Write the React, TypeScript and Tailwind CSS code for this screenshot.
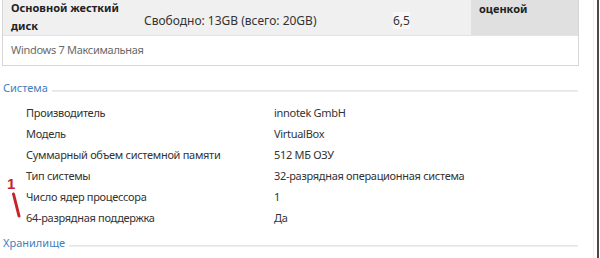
const rows: [string, string][] = [
  ['Производитель', 'innotek GmbH'],
  ['Модель', 'VirtualBox'],
  ['Суммарный объем системной памяти', '512 МБ ОЗУ'],
  ['Тип системы', '32-разрядная операционная система'],
  ['Число ядер процессора', '1'],
  ['64-разрядная поддержка', 'Да'],
];

function SectionHeader({ title }: { title: string }) {
  return (
    <div className="flex h-[20px] w-[576px] items-center">
      <span className="pl-[1px] pr-[4px] text-[11px] text-[#3f7fbf]">{title}</span>
      <div className="mt-[6px] h-[2px] flex-1 bg-gradient-to-b from-[#e2e2e2] to-[#f2f2f2]" />
    </div>
  );
}

export default function App() {
  return (
    <div
      className="relative flex h-[258px] w-[600px] overflow-hidden bg-white text-[#333]"
      style={{ fontFamily: '"Noto Sans", "Open Sans", sans-serif' }}
    >
      <div className="flex w-[594px] flex-col border-r border-[#ececec] pl-[2px]">
        {/* Rating table */}
        <div className="w-[577px] border-x border-b border-[#d6d6d6]">
          <div className="flex h-[35px] bg-[#f0f0f0] text-[12px]">
            <div className="w-[133px] pl-[8px] text-[11px] font-bold leading-[18px] text-[#222]">
              <div className="-mt-[1px]">Основной жесткий</div>
              <div>диск</div>
            </div>
            <div className="w-[250px] pl-[8px] pt-[12px] leading-[18px]">Свободно: 13GB (всего: 20GB)</div>
            <div className="w-[85px] pl-[7px] pt-[12px] leading-[18px]">
              <span className="bg-[#f8f8f8]">6,5</span>
            </div>
            <div className="flex-1 bg-[#e0e0e0] pl-[8px] text-[11px] font-bold leading-[18px] text-[#222]">
              оценкой
            </div>
          </div>
          <div className="flex h-[30px] items-center border-t border-[#e4e4e4] pl-[8px] text-[11px] tracking-[-0.3px] text-[#6a6a6a]">
            Windows 7 Максимальная
          </div>
        </div>

        {/* System section */}
        <div className="mt-[12px]">
          <SectionHeader title="Система" />
        </div>
        <div className="mt-[5px] flex flex-col">
          {rows.map(([label, value]) => (
            <div key={label} className="flex h-[21px] items-center text-[11px] tracking-[-0.3px] text-[#333]">
              <span className="w-[272px] pl-[24px]">{label}</span>
              <span>{value}</span>
            </div>
          ))}
        </div>

        <div className="mt-[4px]">
          <SectionHeader title="Хранилище" />
        </div>
      </div>
      <div className="ml-[3px] w-[2px] bg-[#4a4a4a]" />

      {/* handwritten annotation */}
      <svg className="absolute left-0 top-[172px]" width="30" height="48" viewBox="0 0 30 48">
        <text x="7" y="17" fill="#c4242c" fontSize="15" fontWeight="bold" fontFamily="Liberation Sans, sans-serif">
          1
        </text>
        <path d="M13.5 22 L19 44" stroke="#c4242c" strokeWidth="3" strokeLinecap="round" fill="none" />
      </svg>
    </div>
  );
}
